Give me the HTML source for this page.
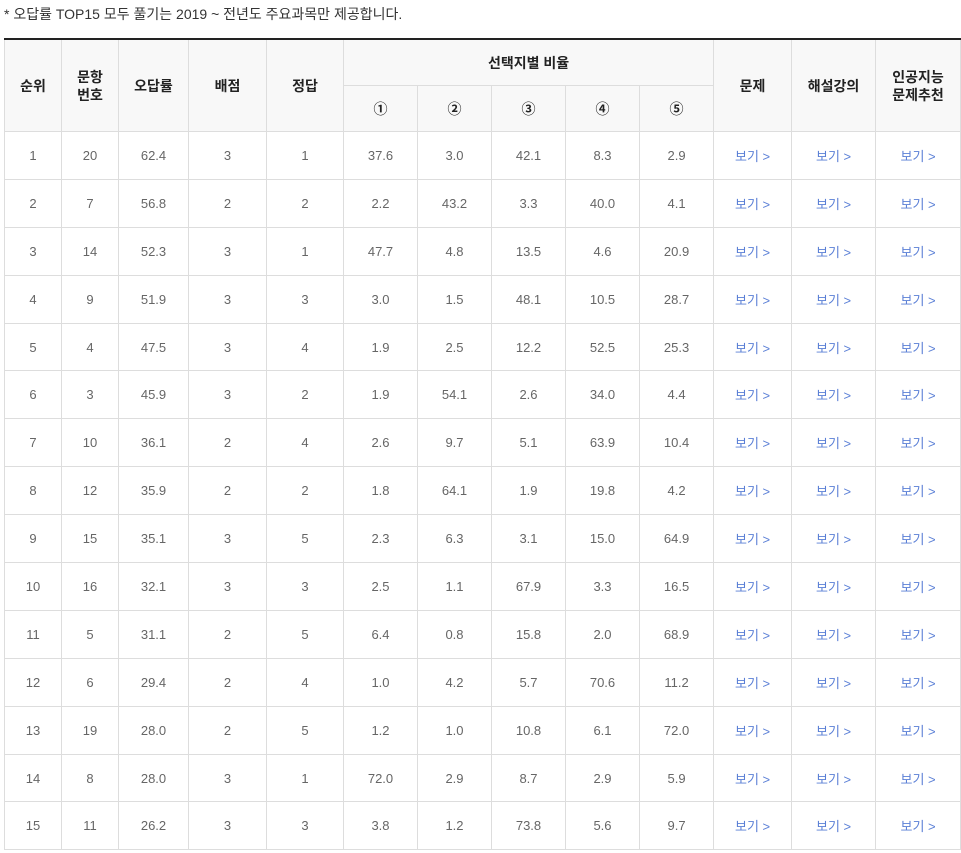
<!DOCTYPE html>
<html><head><meta charset="utf-8"><style>
body{margin:0;background:#fff;font-family:"Liberation Sans","Noto Sans CJK KR",sans-serif;}
.note{position:absolute;left:4px;top:4px;font-size:14px;color:#333;}
table{position:absolute;left:4px;top:38px;border-collapse:collapse;table-layout:fixed;width:956px;border-top:2px solid #222;}
td,th{border:1px solid #ddd;text-align:center;font-size:13px;color:#666;padding:0;}
th{background:#f8f8f8;color:#222;font-size:14px;font-weight:bold;line-height:18px;}
tr.h1 th{height:45px}tr.h2 th{height:45px}
td{height:46.9px}
td a{color:#5a7fd6;text-decoration:none}
</style></head><body>
<div class="note">* 오답률 TOP15 모두 풀기는 2019 ~ 전년도 주요과목만 제공합니다.</div>
<table>
<colgroup><col style="width:57px"><col style="width:57px"><col style="width:70px"><col style="width:78px"><col style="width:77px"><col style="width:74px"><col style="width:74px"><col style="width:74px"><col style="width:74px"><col style="width:74px"><col style="width:78px"><col style="width:84px"><col style="width:85px"></colgroup>
<tr class="h1"><th rowspan="2">순위</th><th rowspan="2">문항<br>번호</th><th rowspan="2">오답률</th><th rowspan="2">배점</th><th rowspan="2">정답</th><th colspan="5">선택지별 비율</th><th rowspan="2">문제</th><th rowspan="2">해설강의</th><th rowspan="2">인공지능<br>문제추천</th></tr>
<tr class="h2"><th>①</th><th>②</th><th>③</th><th>④</th><th>⑤</th></tr>
<tr><td>1</td><td>20</td><td>62.4</td><td>3</td><td>1</td><td>37.6</td><td>3.0</td><td>42.1</td><td>8.3</td><td>2.9</td><td><a>보기 &gt;</a></td><td><a>보기 &gt;</a></td><td><a>보기 &gt;</a></td></tr>
<tr><td>2</td><td>7</td><td>56.8</td><td>2</td><td>2</td><td>2.2</td><td>43.2</td><td>3.3</td><td>40.0</td><td>4.1</td><td><a>보기 &gt;</a></td><td><a>보기 &gt;</a></td><td><a>보기 &gt;</a></td></tr>
<tr><td>3</td><td>14</td><td>52.3</td><td>3</td><td>1</td><td>47.7</td><td>4.8</td><td>13.5</td><td>4.6</td><td>20.9</td><td><a>보기 &gt;</a></td><td><a>보기 &gt;</a></td><td><a>보기 &gt;</a></td></tr>
<tr><td>4</td><td>9</td><td>51.9</td><td>3</td><td>3</td><td>3.0</td><td>1.5</td><td>48.1</td><td>10.5</td><td>28.7</td><td><a>보기 &gt;</a></td><td><a>보기 &gt;</a></td><td><a>보기 &gt;</a></td></tr>
<tr><td>5</td><td>4</td><td>47.5</td><td>3</td><td>4</td><td>1.9</td><td>2.5</td><td>12.2</td><td>52.5</td><td>25.3</td><td><a>보기 &gt;</a></td><td><a>보기 &gt;</a></td><td><a>보기 &gt;</a></td></tr>
<tr><td>6</td><td>3</td><td>45.9</td><td>3</td><td>2</td><td>1.9</td><td>54.1</td><td>2.6</td><td>34.0</td><td>4.4</td><td><a>보기 &gt;</a></td><td><a>보기 &gt;</a></td><td><a>보기 &gt;</a></td></tr>
<tr><td>7</td><td>10</td><td>36.1</td><td>2</td><td>4</td><td>2.6</td><td>9.7</td><td>5.1</td><td>63.9</td><td>10.4</td><td><a>보기 &gt;</a></td><td><a>보기 &gt;</a></td><td><a>보기 &gt;</a></td></tr>
<tr><td>8</td><td>12</td><td>35.9</td><td>2</td><td>2</td><td>1.8</td><td>64.1</td><td>1.9</td><td>19.8</td><td>4.2</td><td><a>보기 &gt;</a></td><td><a>보기 &gt;</a></td><td><a>보기 &gt;</a></td></tr>
<tr><td>9</td><td>15</td><td>35.1</td><td>3</td><td>5</td><td>2.3</td><td>6.3</td><td>3.1</td><td>15.0</td><td>64.9</td><td><a>보기 &gt;</a></td><td><a>보기 &gt;</a></td><td><a>보기 &gt;</a></td></tr>
<tr><td>10</td><td>16</td><td>32.1</td><td>3</td><td>3</td><td>2.5</td><td>1.1</td><td>67.9</td><td>3.3</td><td>16.5</td><td><a>보기 &gt;</a></td><td><a>보기 &gt;</a></td><td><a>보기 &gt;</a></td></tr>
<tr><td>11</td><td>5</td><td>31.1</td><td>2</td><td>5</td><td>6.4</td><td>0.8</td><td>15.8</td><td>2.0</td><td>68.9</td><td><a>보기 &gt;</a></td><td><a>보기 &gt;</a></td><td><a>보기 &gt;</a></td></tr>
<tr><td>12</td><td>6</td><td>29.4</td><td>2</td><td>4</td><td>1.0</td><td>4.2</td><td>5.7</td><td>70.6</td><td>11.2</td><td><a>보기 &gt;</a></td><td><a>보기 &gt;</a></td><td><a>보기 &gt;</a></td></tr>
<tr><td>13</td><td>19</td><td>28.0</td><td>2</td><td>5</td><td>1.2</td><td>1.0</td><td>10.8</td><td>6.1</td><td>72.0</td><td><a>보기 &gt;</a></td><td><a>보기 &gt;</a></td><td><a>보기 &gt;</a></td></tr>
<tr><td>14</td><td>8</td><td>28.0</td><td>3</td><td>1</td><td>72.0</td><td>2.9</td><td>8.7</td><td>2.9</td><td>5.9</td><td><a>보기 &gt;</a></td><td><a>보기 &gt;</a></td><td><a>보기 &gt;</a></td></tr>
<tr><td>15</td><td>11</td><td>26.2</td><td>3</td><td>3</td><td>3.8</td><td>1.2</td><td>73.8</td><td>5.6</td><td>9.7</td><td><a>보기 &gt;</a></td><td><a>보기 &gt;</a></td><td><a>보기 &gt;</a></td></tr>
</table>
</body></html>
